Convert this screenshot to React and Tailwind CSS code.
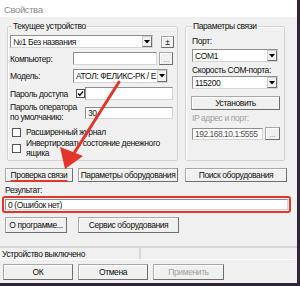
import React from 'react'

const btn =
  'flex items-center justify-center bg-[#f0f0f0] border border-[#a8a8a8] border-r-[#6e6e6e] border-b-[#6e6e6e] shadow-[inset_1px_1px_0_#ffffff] whitespace-nowrap'
const field =
  'bg-white border border-[#8f8f8f] border-r-[#d4d4d4] border-b-[#d4d4d4] flex items-center pl-[2px] whitespace-nowrap overflow-hidden'

function Arrow() {
  return (
    <div className="w-[10px] h-full flex items-center justify-center bg-[#f0f0f0] border border-[#cfcfcf] border-r-[#6e6e6e] border-b-[#6e6e6e]">
      <svg width="6" height="4" viewBox="0 0 6 4">
        <path d="M0 0H6L3 3.5Z" fill="#000" />
      </svg>
    </div>
  )
}

function Select({ text, className }) {
  return (
    <div className={`flex bg-white border border-[#8f8f8f] border-r-[#d4d4d4] border-b-[#d4d4d4] ${className}`}>
      <span className="flex-1 pl-[2px] self-center whitespace-nowrap overflow-hidden">{text}</span>
      <Arrow />
    </div>
  )
}

function Check({ checked, className }) {
  return (
    <div className={`w-[9px] h-[9px] bg-white border border-[#555] flex items-center justify-center ${className}`}>
      {checked && (
        <svg width="7" height="7" viewBox="0 0 7 7">
          <path d="M1 3.5L2.8 5.3L6 1.5" fill="none" stroke="#000" strokeWidth="1.3" />
        </svg>
      )}
    </div>
  )
}

export default function App() {
  return (
    <div className="w-[300px] h-[286px] bg-[#2f2438] overflow-hidden font-['Liberation_Sans',Arial,sans-serif] text-[8.5px] tracking-[-0.4px] text-[#111] leading-[10px]">
      <div className="w-[297px] h-[283px] bg-[#f0f0f0] flex flex-col relative">
        {/* Title */}
        <div className="h-[17px] bg-white pl-[4px] pt-[5px] text-[#8c8c8c] text-[9.5px]">Свойства</div>

        {/* Groups */}
        <div className="flex mt-[9px] pl-[7px] gap-[7px]">
          <div className="relative w-[171px] h-[135px] border border-[#d3d3d3] rounded-[2px] shadow-[inset_1px_1px_0_#ffffff] flex flex-col">
            <span className="absolute -top-[6px] left-[4px] bg-[#f0f0f0] px-[1px]">Текущее устройство</span>

            <div className="flex items-center mt-[8px] pl-[2px]">
              <Select text="№1 Без названия" className="w-[143px] h-[13px]" />
              <div className={`${btn} w-[13px] h-[12px] ml-[8px]`}>±</div>
            </div>

            <div className="flex items-center mt-[4px] pl-[2px]">
              <span className="w-[63px]">Компьютер:</span>
              <div className={`${field} w-[84px] h-[13px]`} />
              <div className={`${btn} w-[14px] h-[13px] ml-[2px] text-[#a0a0a0]`}>...</div>
            </div>

            <div className="flex items-center mt-[4px] pl-[2px]">
              <span className="w-[63px]">Модель:</span>
              <Select text="АТОЛ: ФЕЛИКС-РК / Е" className="w-[95px] h-[14px]" />
            </div>

            <div className="flex items-center mt-[4px] pl-[2px]">
              <span className="w-[66px]">Пароль доступа</span>
              <Check checked />
              <div className={`${field} w-[88px] h-[13px]`} />
            </div>

            <div className="flex items-start mt-[2px] pl-[2px]">
              <span className="w-[75px] leading-[10px]">
                Пароль оператора
                <br />
                по умолчанию:
              </span>
              <div className={`${field} w-[88px] h-[12px] mt-[5px]`}>30</div>
            </div>

            <div className="flex items-center mt-[5px] pl-[4px] gap-[5px]">
              <Check />
              <span>Расширенный журнал</span>
            </div>

            <div className="flex items-start mt-[1px] pl-[4px] gap-[5px]">
              <Check className="mt-[6px]" />
              <span className="leading-[10px] whitespace-nowrap">
                Инвертировать состояние денежного
                <br />
                ящика
              </span>
            </div>
          </div>

          <div className="relative w-[100px] h-[135px] border border-[#d3d3d3] rounded-[2px] shadow-[inset_1px_1px_0_#ffffff] flex flex-col pl-[6px]">
            <span className="absolute -top-[6px] left-[6px] bg-[#f0f0f0] px-[1px]">Параметры связи</span>
            <span className="mt-[9px]">Порт:</span>
            <Select text="COM1" className="w-[86px] h-[13px] mt-[3px]" />
            <span className="mt-[3px]">Скорость COM-порта:</span>
            <Select text="115200" className="w-[86px] h-[13px] mt-[1px]" />
            <div className={`${btn} w-[89px] h-[14px] mt-[7px] -ml-[1px]`}>Установить</div>
            <span className="mt-[3px] text-[#a0a0a0]">IP адрес и порт:</span>
            <div className="flex items-center mt-[4px]">
              <div className={`${field} w-[71px] h-[12px] text-[#555] tracking-[-0.5px]`}>192.168.10.1:5555</div>
              <div className={`${btn} w-[15px] h-[13px] ml-[2px] text-[#a0a0a0]`}>...</div>
            </div>
          </div>
        </div>

        {/* Buttons row 1 */}
        <div className="flex mt-[7px] pl-[5px]">
          <div className={`${btn} w-[68px] h-[14px]`}>
            <span className="underline decoration-[#e2362b] decoration-2 underline-offset-[2px]">Проверка связи</span>
          </div>
          <div className={`${btn} w-[100px] h-[14px] ml-[5px]`}>Параметры оборудования</div>
          <div className={`${btn} w-[102px] h-[14px] ml-[7px]`}>Поиск оборудования</div>
        </div>

        <span className="mt-[3px] pl-[5px]">Результат:</span>
        <div className="ml-[2px] mt-[1px] w-[289px] h-[17px] border-2 border-[#e2362b] rounded-[3px] p-px">
          <div className={`${field} w-full h-full`}>0 (Ошибок нет)</div>
        </div>

        {/* Buttons row 2 */}
        <div className="flex mt-[4px] pl-[5px]">
          <div className={`${btn} w-[62px] h-[16px]`}>О программе...</div>
          <div className={`${btn} w-[101px] h-[16px] ml-[11px]`}>Сервис оборудования</div>
        </div>

        {/* Status bar */}
        <div className="flex mt-[13px] h-[14px] border-t-2 border-[#d6d6d6] border-b border-b-white">
          <span className="w-[141px] pl-[2px] pt-[1px] border-r-2 border-[#d6d6d6]">Устройство выключено</span>
        </div>

        {/* Bottom buttons */}
        <div className="flex mt-[4px] pl-[3px] gap-[5px]">
          <div className={`${btn} w-[70px] h-[16px]`}>ОК</div>
          <div className={`${btn} w-[70px] h-[16px]`}>Отмена</div>
          <div className={`${btn} w-[71px] h-[16px] text-[#a0a0a0]`}>Применить</div>
        </div>

        {/* Annotation arrow */}
        <svg className="absolute inset-0 pointer-events-none" width="297" height="283" viewBox="0 0 297 283">
          <line x1="119" y1="82" x2="71" y2="158" stroke="#e2362b" strokeWidth="3" strokeLinecap="round" />
          <polygon points="65,169 60,147 83,156" fill="#e2362b" />
        </svg>
      </div>
    </div>
  )
}
